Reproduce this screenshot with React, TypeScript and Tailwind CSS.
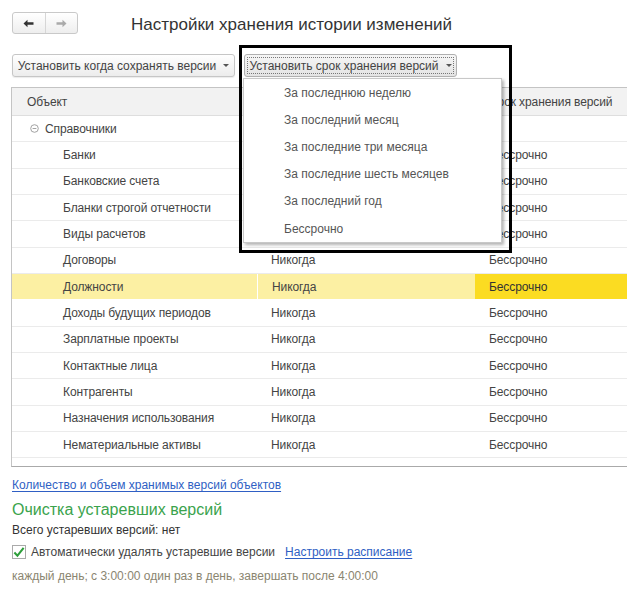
import React from "react"

const rows = [
  "Банки",
  "Банковские счета",
  "Бланки строгой отчетности",
  "Виды расчетов",
  "Договоры",
  "Должности",
  "Доходы будущих периодов",
  "Зарплатные проекты",
  "Контактные лица",
  "Контрагенты",
  "Назначения использования",
  "Нематериальные активы",
]

const menu = [
  "За последнюю неделю",
  "За последний месяц",
  "За последние три месяца",
  "За последние шесть месяцев",
  "За последний год",
  "Бессрочно",
]

function Caret() {
  return <span className="ml-[7px] inline-block border-x-[3px] border-t-[3px] border-x-transparent border-t-[#555] align-middle" />
}

export default function App() {
  return (
    <div className="relative w-[627px] h-[593px] overflow-hidden bg-white font-['Liberation_Sans',Arial,sans-serif] text-[12px] text-[#444]">
      {/* Заголовок с кнопками навигации */}
      <div className="flex items-center pl-3 pt-3">
        <div className="flex h-[22px] w-[66px] rounded-[3px] border border-[#c9c9c9] bg-gradient-to-b from-white to-[#eeeeee]">
          <div className="flex flex-1 items-center justify-center border-r border-[#d6d6d6]">
            <svg width="11" height="9" viewBox="0 0 11 9">
              <path d="M0.5 4.5 L4.5 0.8 L4.5 3.3 L10.5 3.3 L10.5 5.7 L4.5 5.7 L4.5 8.2 Z" fill="#333" />
            </svg>
          </div>
          <div className="flex flex-1 items-center justify-center">
            <svg width="11" height="9" viewBox="0 0 11 9">
              <path d="M10.5 4.5 L6.5 0.8 L6.5 3.3 L0.5 3.3 L0.5 5.7 L6.5 5.7 L6.5 8.2 Z" fill="#aaa" />
            </svg>
          </div>
        </div>
        <h1 className="ml-[53px] mt-[3px] text-[17px] leading-none text-[#333]">Настройки хранения истории изменений</h1>
      </div>

      {/* Панель кнопок */}
      <div className="mt-[20px] flex gap-[9px] pl-3">
        <button className="flex h-[23px] w-[223px] items-center justify-center whitespace-nowrap rounded-[3px] border border-[#c6c6c6] bg-gradient-to-b from-white to-[#ececec] text-[12px] text-[#444] shadow-[0_1px_1px_rgba(0,0,0,0.08)]">
          Установить когда сохранять версии
          <Caret />
        </button>
        <button className="flex h-[23px] w-[213px] items-center justify-center whitespace-nowrap rounded-[3px] border border-[#b0b0b0] bg-gradient-to-b from-[#f6f6f6] to-[#e4e4e4] p-[2px] text-[12px] text-[#444]">
          <span className="flex h-full w-full items-center justify-center border border-dotted border-[#777]">
            Установить срок хранения версий
            <Caret />
          </span>
        </button>
      </div>

      {/* Таблица */}
      <div className="ml-[11px] mt-[10px] w-[616px] border-b border-l border-t border-[#c4c4c4] border-b-[#aaa] tracking-[-0.1px]">
        <div className="flex h-[28px] items-center border-b border-[#dedede] bg-[#f2f2f2]">
          <div className="w-[245px] pl-[15px]">Объект</div>
          <div className="w-[218px] pl-[14px]">Когда сохранять версии</div>
          <div className="flex-1 pl-[14px]">Срок хранения версий</div>
        </div>
        <div className="flex h-[26.33px] items-center border-b border-[#ebebeb]">
          <div className="flex w-[245px] items-center pl-[18px]">
            <svg width="9" height="9" viewBox="0 0 9 9" className="mr-[6px]">
              <circle cx="4.5" cy="4.5" r="3.8" fill="none" stroke="#999" strokeWidth="0.9" />
              <path d="M2.6 4.5 H6.4" stroke="#999" strokeWidth="0.9" />
            </svg>
            Справочники
          </div>
        </div>
        {rows.map((r) => {
          const sel = r === "Должности"
          return (
            <div key={r} className={"flex h-[26.33px] items-stretch border-b " + (sel ? "border-white" : "border-[#ebebeb]")}>
              <div className={"flex w-[245px] items-center pl-[51px] " + (sel ? "bg-[#fcf0a3]" : "")}>{r}</div>
              <div className={"flex w-[218px] items-center pl-[14px] " + (sel ? "border-l border-white bg-[#fcf0a3]" : "")}>Никогда</div>
              <div className={"flex flex-1 items-center pl-[14px] " + (sel ? "bg-[#fbdc22] text-[#333]" : "")}>Бессрочно</div>
            </div>
          )
        })}
        <div className="h-[8px]" />
      </div>

      {/* Нижняя часть */}
      <div className="mt-[9px] pl-3">
        <a className="text-[12px] text-[#2f5fc4] underline underline-offset-2">Количество и объем хранимых версий объектов</a>
        <div className="mt-[6px] text-[16px] leading-[20px] text-[#3aa34c]">Очистка устаревших версий</div>
        <div className="mt-[2px] text-[12px] leading-[16px] text-[#333]">Всего устаревших версий: нет</div>
        <div className="mt-[5px] flex items-center">
          <span className="flex h-[14px] w-[14px] items-center justify-center border border-[#aaa] bg-white">
            <svg width="13" height="12" viewBox="0 0 13 12">
              <path d="M1.5 6.5 L4.8 10 L11.5 1.5" fill="none" stroke="#2d9e3a" strokeWidth="2.2" />
            </svg>
          </span>
          <span className="ml-[5px] text-[#444]">Автоматически удалять устаревшие версии</span>
          <a className="ml-[10px] text-[#2f5fc4] underline underline-offset-2">Настроить расписание</a>
        </div>
        <div className="mt-[6px] text-[12px] text-[#8a8570]">каждый день; с 3:00:00 один раз в день, завершать после 4:00:00</div>
      </div>

      {/* Выпадающее меню */}
      <div className="absolute left-[243px] top-[78px] h-[165px] w-[259px] border border-[#c8c8c8] bg-white shadow-[2px_2px_3px_rgba(0,0,0,0.3)]">
        {menu.map((m) => (
          <div key={m} className="flex h-[27.2px] items-center pl-[40px] text-[#555]">{m}</div>
        ))}
      </div>

      {/* Рамка выделения */}
      <div className="pointer-events-none absolute left-[239px] top-[45px] h-[208px] w-[273px] border-[3px] border-black" />
    </div>
  )
}
